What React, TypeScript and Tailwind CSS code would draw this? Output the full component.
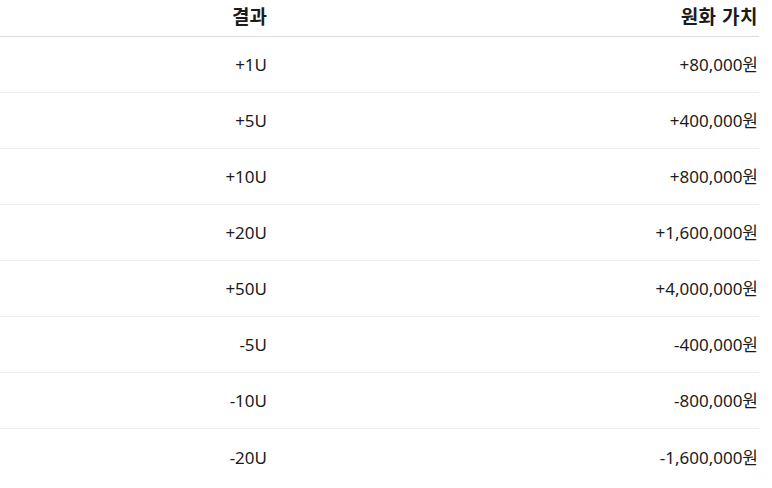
import React from "react";

const rows = [
  { result: "+1U", value: "+80,000원" },
  { result: "+5U", value: "+400,000원" },
  { result: "+10U", value: "+800,000원" },
  { result: "+20U", value: "+1,600,000원" },
  { result: "+50U", value: "+4,000,000원" },
  { result: "-5U", value: "-400,000원" },
  { result: "-10U", value: "-800,000원" },
  { result: "-20U", value: "-1,600,000원" },
];

const App = () => {
  return (
    <div className="w-[772px] h-[488px] overflow-hidden bg-white font-['Noto_Sans','Noto_Sans_CJK_KR',sans-serif] text-[17px] text-[#1b1b1b]">
      <table className="w-[759px] border-collapse">
        <thead>
          <tr className="h-[36px] border-b border-[#dcdcdc]">
            <th className="w-[268px] pr-[1px] pb-[2px] text-right text-[19px] font-bold">결과</th>
            <th className="pr-[1px] pb-[2px] text-right text-[19px] font-bold tracking-[0.5px]">원화 가치</th>
          </tr>
        </thead>
        <tbody>
          {rows.map((row, i) => (
            <tr
              key={row.result}
              className={i < rows.length - 1 ? "h-[56px] border-b border-[#eeeeee]" : "h-[56px]"}
            >
              <td className="pr-[1px] pt-[2px] text-right">{row.result}</td>
              <td className="pr-[1px] pt-[2px] text-right">{row.value}</td>
            </tr>
          ))}
        </tbody>
      </table>
    </div>
  );
};

export default App;
